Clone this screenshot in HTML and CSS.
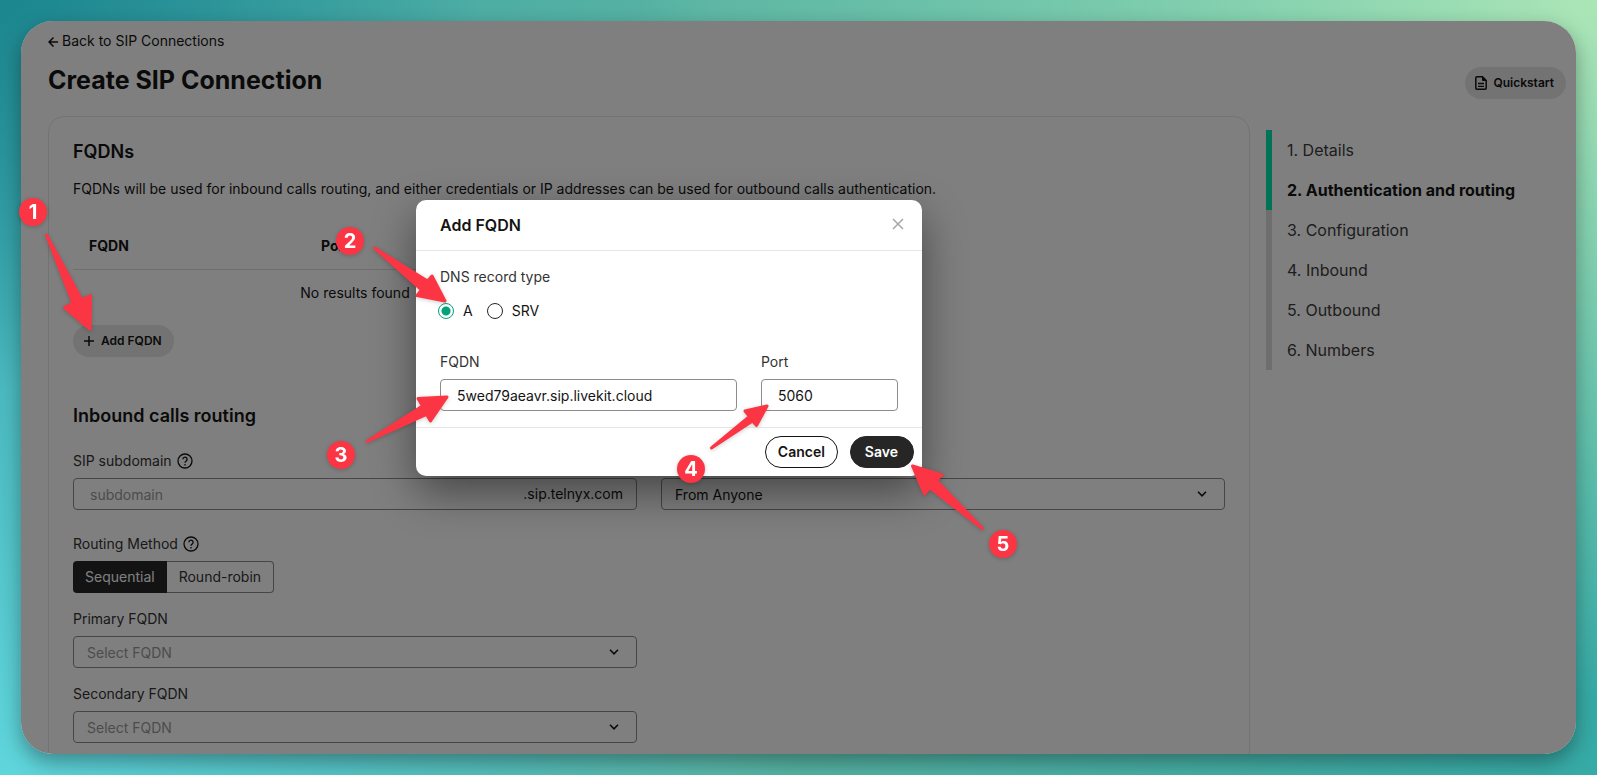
FILE: index.html
```html
<!DOCTYPE html>
<html lang="en">
  <head>
    <meta charset="UTF-8" />
    <meta name="viewport" content="width=device-width, initial-scale=1.0" />
    <title>Create SIP Connection</title>
    <link rel="stylesheet" href="styles.css">
  </head>
  <body>
    <div class="window">
      <a class="back" href="#">
        <svg width="10" height="12" viewBox="0 0 10 12" fill="none" stroke="currentColor" stroke-width="1.5"><path d="M10 7H1M5.500 2.500 1 7l4.500 4.500" /></svg>
        Back to SIP Connections
      </a>

      <header class="page-header">
        <h1>Create SIP Connection</h1>
        <button type="button" class="btn-soft quickstart">
          <svg width="12" height="14" viewBox="0 0 12 14" fill="none" stroke="currentColor" stroke-width="1.5"><path d="M7.5.8H2Q.8.8.8 2v10q0 1.2 1.2 1.2h8q1.2 0 1.2-1.2V4.500z" /><path d="M7.500.8v3.700h3.700z" fill="currentColor" stroke-width="1" /><path d="M3 7.500h6M3 10.300h6" stroke-width="1.300" /></svg>
          Quickstart
        </button>
      </header>

      <div class="layout">
        <main class="card">
          <h2>FQDNs</h2>
          <p class="intro">FQDNs will be used for inbound calls routing, and either credentials or IP addresses can be used for outbound calls authentication.</p>

          <div class="columns">
            <table>
              <thead>
                <tr><th class="col-fqdn">FQDN</th><th>Port</th></tr>
              </thead>
              <tbody>
                <tr><td colspan="2">No results found</td></tr>
              </tbody>
            </table>
          </div>

          <button type="button" class="btn-soft">
            <svg width="10" height="10" viewBox="0 0 10 10" stroke="currentColor" stroke-width="1.5"><path d="M5 0v10M0 5h10" /></svg>
            Add FQDN
          </button>

          <h2 class="section">Inbound calls routing</h2>

          <div class="columns">
            <div class="field">
              <label for="subdomain">SIP subdomain
                <svg class="help" width="16" height="16" viewBox="0 0 16 16" fill="none" stroke="currentColor" stroke-width="1.3"><circle cx="8" cy="8" r="7" /><path d="M5.900 6.300a2.100 2.100 0 1 1 3.300 1.700C8.400 8.600 8 8.900 8 9.700M8 11v1.500" /></svg>
              </label>
              <div class="input-group">
                <input type="text" id="subdomain" placeholder="subdomain" />
                <span>.sip.telnyx.com</span>
              </div>
            </div>
            <div class="select">
              <select aria-label="Receive calls"><option>From Anyone</option></select>
              <svg width="10" height="6" viewBox="0 0 10 6" fill="none" stroke="currentColor" stroke-width="1.6"><path d="M1 .8 5 4.800l4-4" /></svg>
            </div>
          </div>

          <fieldset class="routing">
            <legend>Routing Method
              <svg class="help" width="16" height="16" viewBox="0 0 16 16" fill="none" stroke="currentColor" stroke-width="1.3"><circle cx="8" cy="8" r="7" /><path d="M5.900 6.300a2.100 2.100 0 1 1 3.300 1.700C8.400 8.600 8 8.900 8 9.700M8 11v1.500" /></svg>
            </legend>
            <div class="segmented">
              <button type="button" class="active">Sequential</button>
              <button type="button">Round-robin</button>
            </div>
          </fieldset>

          <div class="columns stacked">
            <div class="field">
              <label for="primary">Primary FQDN</label>
              <div class="select">
                <select id="primary" class="empty"><option>Select FQDN</option></select>
                <svg width="10" height="6" viewBox="0 0 10 6" fill="none" stroke="currentColor" stroke-width="1.6"><path d="M1 .8 5 4.800l4-4" /></svg>
              </div>
            </div>
          </div>

          <div class="columns stacked">
            <div class="field">
              <label for="secondary">Secondary FQDN</label>
              <div class="select">
                <select id="secondary" class="empty"><option>Select FQDN</option></select>
                <svg width="10" height="6" viewBox="0 0 10 6" fill="none" stroke="currentColor" stroke-width="1.6"><path d="M1 .8 5 4.800l4-4" /></svg>
              </div>
            </div>
          </div>
        </main>

        <nav class="steps">
          <a class="done" href="#">1. Details</a>
          <a class="done current" href="#">2. Authentication and routing</a>
          <a href="#">3. Configuration</a>
          <a href="#">4. Inbound</a>
          <a href="#">5. Outbound</a>
          <a href="#">6. Numbers</a>
        </nav>
      </div>

      <div class="mask">
        <form class="modal" role="dialog" aria-labelledby="modalTitle">
          <div class="modal-header">
            <h2 id="modalTitle">Add FQDN</h2>
            <button type="button" class="close" aria-label="Close">
              <svg width="12" height="12" viewBox="0 0 12 12" stroke="currentColor" stroke-width="1.5"><path d="m1 1 10 10M11 1 1 11" /></svg>
            </button>
          </div>

          <div class="modal-body">
            <fieldset>
              <legend>DNS record type</legend>
              <div class="radios">
                <label><input type="radio" name="record" checked />A</label>
                <label><input type="radio" name="record" />SRV</label>
              </div>
            </fieldset>
            <div class="modal-fields">
              <div class="field">
                <label for="fqdn">FQDN</label>
                <input type="text" id="fqdn" value="5wed79aeavr.sip.livekit.cloud" />
              </div>
              <div class="field port">
                <label for="port">Port</label>
                <input type="text" id="port" value="5060" />
              </div>
            </div>
          </div>

          <div class="modal-footer">
            <button type="button" class="cancel">Cancel</button>
            <button type="button" class="save">Save</button>
          </div>
        </form>
      </div>
    </div>

    <!-- numbered arrows over the page -->
    <svg class="callouts" width="1597" height="775" viewBox="0 0 1597 775">
      <g class="arrow">
        <path d="M46.500 235 73 303 64.500 307.500 90 329 90.500 295.500 81.500 299.500z" />
        <path d="M374.500 248 421.500 290 417 295.500 445 301 432 276 427.500 281z" />
        <path d="M367 441.500 426.500 414.500 430.500 421 447 397 418 398.500 422.500 406z" />
        <path d="M711.500 448 752.500 421 756.500 425.500 767 406 745 411 749.500 416.500z" />
        <path d="M912.500 466 924.500 494 929.500 487.500 982.500 528.500 936 480 942 475z" />
      </g>
      <g class="badge">
        <circle cx="33" cy="212" r="14" /><text x="33" y="219">1</text>
        <circle cx="350" cy="241" r="14" /><text x="350" y="248">2</text>
        <circle cx="341" cy="455" r="14" /><text x="341" y="462">3</text>
        <circle cx="691" cy="469" r="14" /><text x="691" y="476">4</text>
        <circle cx="1003" cy="544" r="14" /><text x="1003" y="551">5</text>
      </g>
    </svg>
  </body>
</html>
```
FILE: styles.css
```css
* {
    box-sizing: border-box;
}

body {
    position: relative;
    margin: 0;
    height: 100vh;
    padding: 21px;
    overflow: hidden;
    font: 14px/20px Inter, sans-serif;
    color: #141414;
    background:
        radial-gradient(ellipse 30% 50% at 0% 0%, #1c868f, transparent),
        radial-gradient(ellipse 50% 90% at 0% 100%, #5fd6dc, transparent),
        radial-gradient(ellipse 60% 90% at 100% 0%, #ace6b6, transparent),
        linear-gradient(90deg, #3aa3a9, #58b3a2 45%, #36aaa6);
}

h1,
h2,
p {
    margin: 0;
}

a {
    color: inherit;
    text-decoration: none;
}

button,
input,
select {
    font: inherit;
    color: inherit;
}

button {
    cursor: pointer;
}

fieldset {
    margin: 0;
    padding: 0;
    border: 0;
}

legend {
    padding: 0;
}

/* App window */
.window {
    position: relative;
    height: 100%;
    padding: 10px 10px 0 27px;
    overflow: hidden;
    background: #ffffff;
    border-radius: 32px;
}

body::before {
    content: "";
    position: absolute;
    inset: 21px;
    border-radius: 32px;
    box-shadow: 0 8px 20px rgba(0, 0, 0, 0.35);
}

.back {
    display: flex;
    align-items: center;
    gap: 4px;
}

.page-header {
    display: flex;
    justify-content: space-between;
    min-height: 35px;
    margin: 13px 0 17px;
}

h1 {
    font-size: 25px;
    font-weight: 700;
    line-height: 32px;
}

h2 {
    font-size: 18px;
    font-weight: 600;
    line-height: 24px;
}

.btn-soft {
    display: flex;
    align-items: center;
    gap: 7px;
    height: 32px;
    padding: 0 12px 0 11px;
    border: 0;
    border-radius: 16px;
    background: #e6e6e6;
    font-size: 12px;
    font-weight: 600;
}

.quickstart {
    align-self: flex-end;
    gap: 6px;
    padding-left: 10px;
}

.layout {
    display: grid;
    grid-template-columns: 1fr 300px;
    gap: 16px;
    align-items: start;
}

.card {
    padding: 23px 24px 24px;
    border: 1px solid #e6e6e6;
    border-radius: 16px;
}

.intro {
    margin: 15px 0 25px;
}

.columns {
    display: grid;
    grid-template-columns: 1fr 1fr;
    gap: 24px;
    align-items: end;
}

.stacked {
    margin-top: 16px;
}

table {
    width: 100%;
    margin-bottom: 8px;
    border-collapse: collapse;
}

th {
    height: 45px;
    padding: 0 16px;
    border-bottom: 1px solid #dedede;
    font-weight: 700;
    text-align: left;
}

.col-fqdn {
    width: 232px;
}

td {
    height: 48px;
    padding: 0;
    text-align: center;
}

.section {
    margin: 47px 0 23px;
}

/* Form controls */
.field > label,
legend {
    display: flex;
    align-items: center;
    gap: 5px;
    margin-bottom: 7px;
    color: #333333;
}

.help {
    color: #141414;
}

input[type="text"],
select,
.input-group {
    width: 100%;
    height: 32px;
    border: 1px solid #8c8c8c;
    border-radius: 4px;
    background: transparent;
}

input[type="text"] {
    padding: 0 16px;
}

input::placeholder {
    color: #999999;
    opacity: 1;
}

.input-group {
    display: flex;
    align-items: center;
    padding-right: 13px;
}

.input-group input[type="text"] {
    flex: 1;
    border: 0;
}

.select {
    position: relative;
}

.select svg {
    position: absolute;
    right: 18px;
    top: 13px;
}

select {
    appearance: none;
    padding: 2px 13px 0;
}

select.empty {
    color: #999999;
}

.routing {
    margin-top: 24px;
}

.segmented {
    display: flex;
}

.segmented button {
    height: 32px;
    padding: 0 12px;
    border: 1px solid #8c8c8c;
    border-left: 0;
    border-radius: 0 4px 4px 0;
    background: transparent;
    color: #333333;
}

.segmented .active {
    border: 0;
    border-radius: 4px 0 0 4px;
    background: #262626;
    color: #ffffff;
}

.steps {
    margin-top: 14px;
    font-size: 16px;
    line-height: 40px;
    color: #3d3d3d;
}

.steps a {
    display: block;
    padding-left: 15px;
    border-left: 6px solid #dcdcdc;
}

.steps .done {
    border-color: #00e6ad;
}

.steps .current {
    color: #141414;
    font-weight: 700;
}

/* Modal */
.mask {
    position: absolute;
    inset: 0;
    display: flex;
    justify-content: center;
    align-items: flex-start;
    padding: 179px 259px 0 0;
    background: rgba(0, 0, 0, 0.5);
}

.modal {
    width: 506px;
    border-radius: 10px;
    background: #ffffff;
    box-shadow: 0 16px 44px rgba(0, 0, 0, 0.45);
}

.modal-header {
    display: flex;
    justify-content: space-between;
    align-items: center;
    height: 51px;
    padding: 0 18px 0 24px;
    border-bottom: 1px solid #e6e6e6;
}

.modal-header h2 {
    font-size: 16px;
}

.close {
    display: flex;
    padding: 0 0 3px;
    width: 12px;
    border: 0;
    background: none;
    color: #a6a6a6;
}

.modal-body {
    padding: 16px 24px;
}

.radios {
    display: flex;
    gap: 14px;
    margin-left: -2px;
}

.radios label {
    display: flex;
    align-items: center;
    gap: 9px;
    height: 34px;
}

input[type="radio"] {
    appearance: none;
    width: 16px;
    height: 16px;
    margin: 0;
    border: 1px solid #262626;
    border-radius: 50%;
}

input[type="radio"]:checked {
    border-color: #00a37a;
    background: radial-gradient(circle, #00a37a 4px, transparent 5px);
}

.modal-fields {
    display: flex;
    gap: 24px;
    margin-top: 24px;
}

.modal-fields .field {
    flex: 1;
}

.modal-fields .port {
    flex: 0 0 137px;
}

.modal-footer {
    display: flex;
    justify-content: flex-end;
    gap: 12px;
    padding: 8px;
    border-top: 1px solid #e6e6e6;
}

.modal-footer button {
    height: 32px;
    padding: 0 12px;
    border: 1px solid #141414;
    border-radius: 16px;
    background: #ffffff;
    font-weight: 600;
}

.modal-footer .save {
    padding: 0 15px 0 14px;
    border-color: #262626;
    background: #262626;
    color: #ffffff;
}

/* Callouts */
.callouts {
    position: absolute;
    left: 0;
    top: 0;
    pointer-events: none;
    filter: drop-shadow(0 1px 2px rgba(0, 0, 0, 0.2));
}

.arrow {
    fill: #fb3544;
    stroke: #fb3544;
    stroke-width: 3;
    stroke-linejoin: round;
}

.badge {
    fill: #fb3544;
}

.badge text {
    fill: #ffffff;
    font-size: 20px;
    font-weight: 700;
    text-anchor: middle;
}
```
